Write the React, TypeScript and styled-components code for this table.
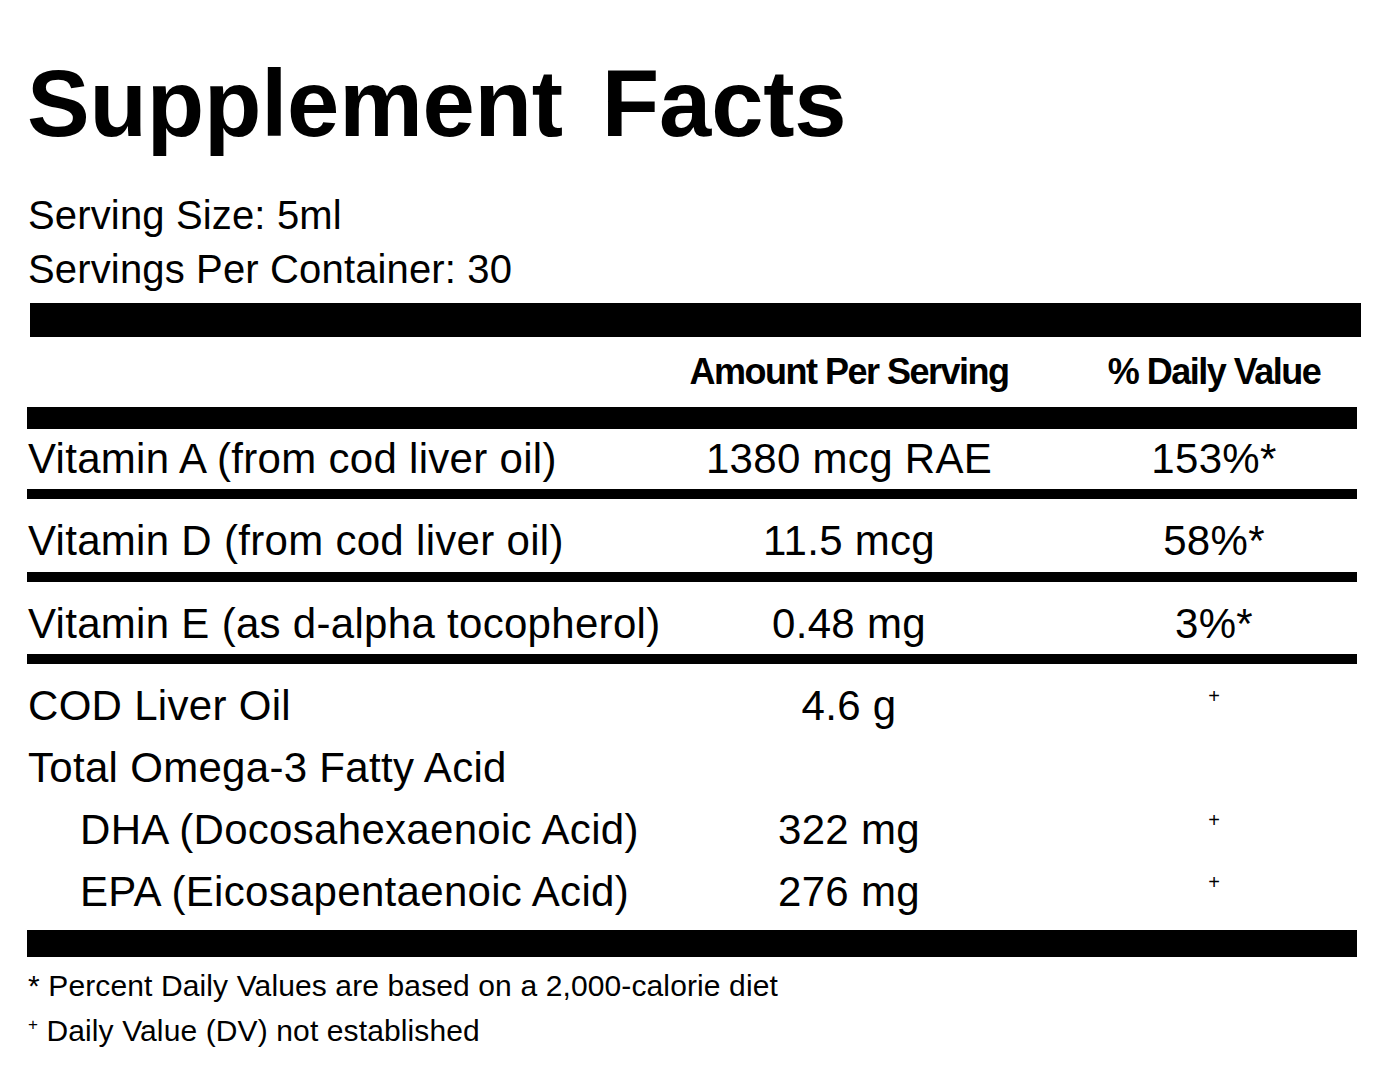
import React from "react";
import styled, { createGlobalStyle } from "styled-components";

const GlobalStyle = createGlobalStyle`
  html, body {
    margin: 0;
    padding: 0;
    background: #ffffff;
  }
  body {
    font-family: "Liberation Sans", Arial, Helvetica, sans-serif;
    color: #000000;
  }
`;

const Label = styled.main`
  width: 1330px;
  padding: 57px 0 0 27px;
`;

const Title = styled.h1`
  margin: 0;
  font-size: 94px;
  line-height: 94px;
  font-weight: 700;
  letter-spacing: -0.2px;
  word-spacing: 13px;
  white-space: nowrap;
`;

const ServingInfo = styled.div`
  margin-top: 37px;
  font-size: 40px;
  line-height: 54px;
  letter-spacing: 0.15px;
  padding-left: 1px;
`;

const Bar = styled.div<{ $h: number; $mt?: number; $ml?: number; $mr?: number }>`
  height: ${(p) => p.$h}px;
  background: #000;
  margin-top: ${(p) => p.$mt ?? 0}px;
  margin-left: ${(p) => p.$ml ?? 0}px;
  margin-right: ${(p) => p.$mr ?? 0}px;
`;

const Grid = styled.div`
  display: grid;
  grid-template-columns: 600px 444px 286px;
  align-items: start;
`;

const HeaderRow = styled(Grid)`
  height: 70px;
  font-size: 36px;
  line-height: 70px;
  font-weight: 700;
  letter-spacing: -1.5px;
`;

const HeadCell = styled.div`
  text-align: center;
  white-space: nowrap;
`;

const NutrientRow = styled(Grid)<{ $pt: number; $lh: number }>`
  padding-top: ${(p) => p.$pt}px;
  font-size: 42px;
  line-height: ${(p) => p.$lh}px;
  letter-spacing: 0.3px;
`;

const NameCell = styled.div<{ $indent?: boolean }>`
  white-space: nowrap;
  padding-left: ${(p) => (p.$indent ? 53 : 1)}px;
`;

const ValueCell = styled.div`
  text-align: center;
  white-space: nowrap;
`;

const Group = styled.div`
  padding-top: 11px;
  padding-bottom: 7px;
`;

const Plus = styled.span<{ $size: number; $raise: number }>`
  font-size: ${(p) => p.$size}px;
  vertical-align: ${(p) => p.$raise}px;
  line-height: 1;
  letter-spacing: 0;
`;

const Footnotes = styled.div`
  margin-top: 6px;
  font-size: 30px;
  line-height: 45px;
  letter-spacing: 0.12px;
  padding-left: 1px;
`;

type Nutrient = { name: string; amount: string; dv: string };

const vitamins: Nutrient[] = [
  { name: "Vitamin A (from cod liver oil)", amount: "1380 mcg RAE", dv: "153%*" },
  { name: "Vitamin D (from cod liver oil)", amount: "11.5 mcg", dv: "58%*" },
  { name: "Vitamin E (as d-alpha tocopherol)", amount: "0.48 mg", dv: "3%*" },
];

type Oil = { name: string; amount: string; plus: boolean; indent?: boolean };

const oils: Oil[] = [
  { name: "COD Liver Oil", amount: "4.6 g", plus: true },
  { name: "Total Omega-3 Fatty Acid", amount: "", plus: false },
  { name: "DHA (Docosahexaenoic Acid)", amount: "322 mg", plus: true, indent: true },
  { name: "EPA (Eicosapentaenoic Acid)", amount: "276 mg", plus: true, indent: true },
];

export default function App() {
  return (
    <>
      <GlobalStyle />
      <Label>
        <Title>Supplement Facts</Title>
        <ServingInfo>
          <div>Serving Size: 5ml</div>
          <div>Servings Per Container: 30</div>
        </ServingInfo>
        <Bar $h={34} $mt={7} $ml={3} $mr={-4} />
        <HeaderRow>
          <div />
          <HeadCell>Amount Per Serving</HeadCell>
          <HeadCell>% Daily Value</HeadCell>
        </HeaderRow>
        <Bar $h={22} />
        {vitamins.map((v, i) => (
          <React.Fragment key={v.name}>
            <NutrientRow $pt={i === 0 ? 0 : 12} $lh={i === 0 ? 60 : 60.5}>
              <NameCell>{v.name}</NameCell>
              <ValueCell>{v.amount}</ValueCell>
              <ValueCell>{v.dv}</ValueCell>
            </NutrientRow>
            <Bar $h={10} />
          </React.Fragment>
        ))}
        <Group>
          {oils.map((o) => (
            <NutrientRow key={o.name} $pt={0} $lh={62}>
              <NameCell $indent={o.indent}>{o.name}</NameCell>
              <ValueCell>{o.amount}</ValueCell>
              <ValueCell>
                {o.plus ? (
                  <Plus $size={20} $raise={17}>
                    +
                  </Plus>
                ) : null}
              </ValueCell>
            </NutrientRow>
          ))}
        </Group>
        <Bar $h={27} />
        <Footnotes>
          <div>* Percent Daily Values are based on a 2,000-calorie diet</div>
          <div>
            <Plus $size={17} $raise={11}>
              +
            </Plus>{" "}
            Daily Value (DV) not established
          </div>
        </Footnotes>
      </Label>
    </>
  );
}
